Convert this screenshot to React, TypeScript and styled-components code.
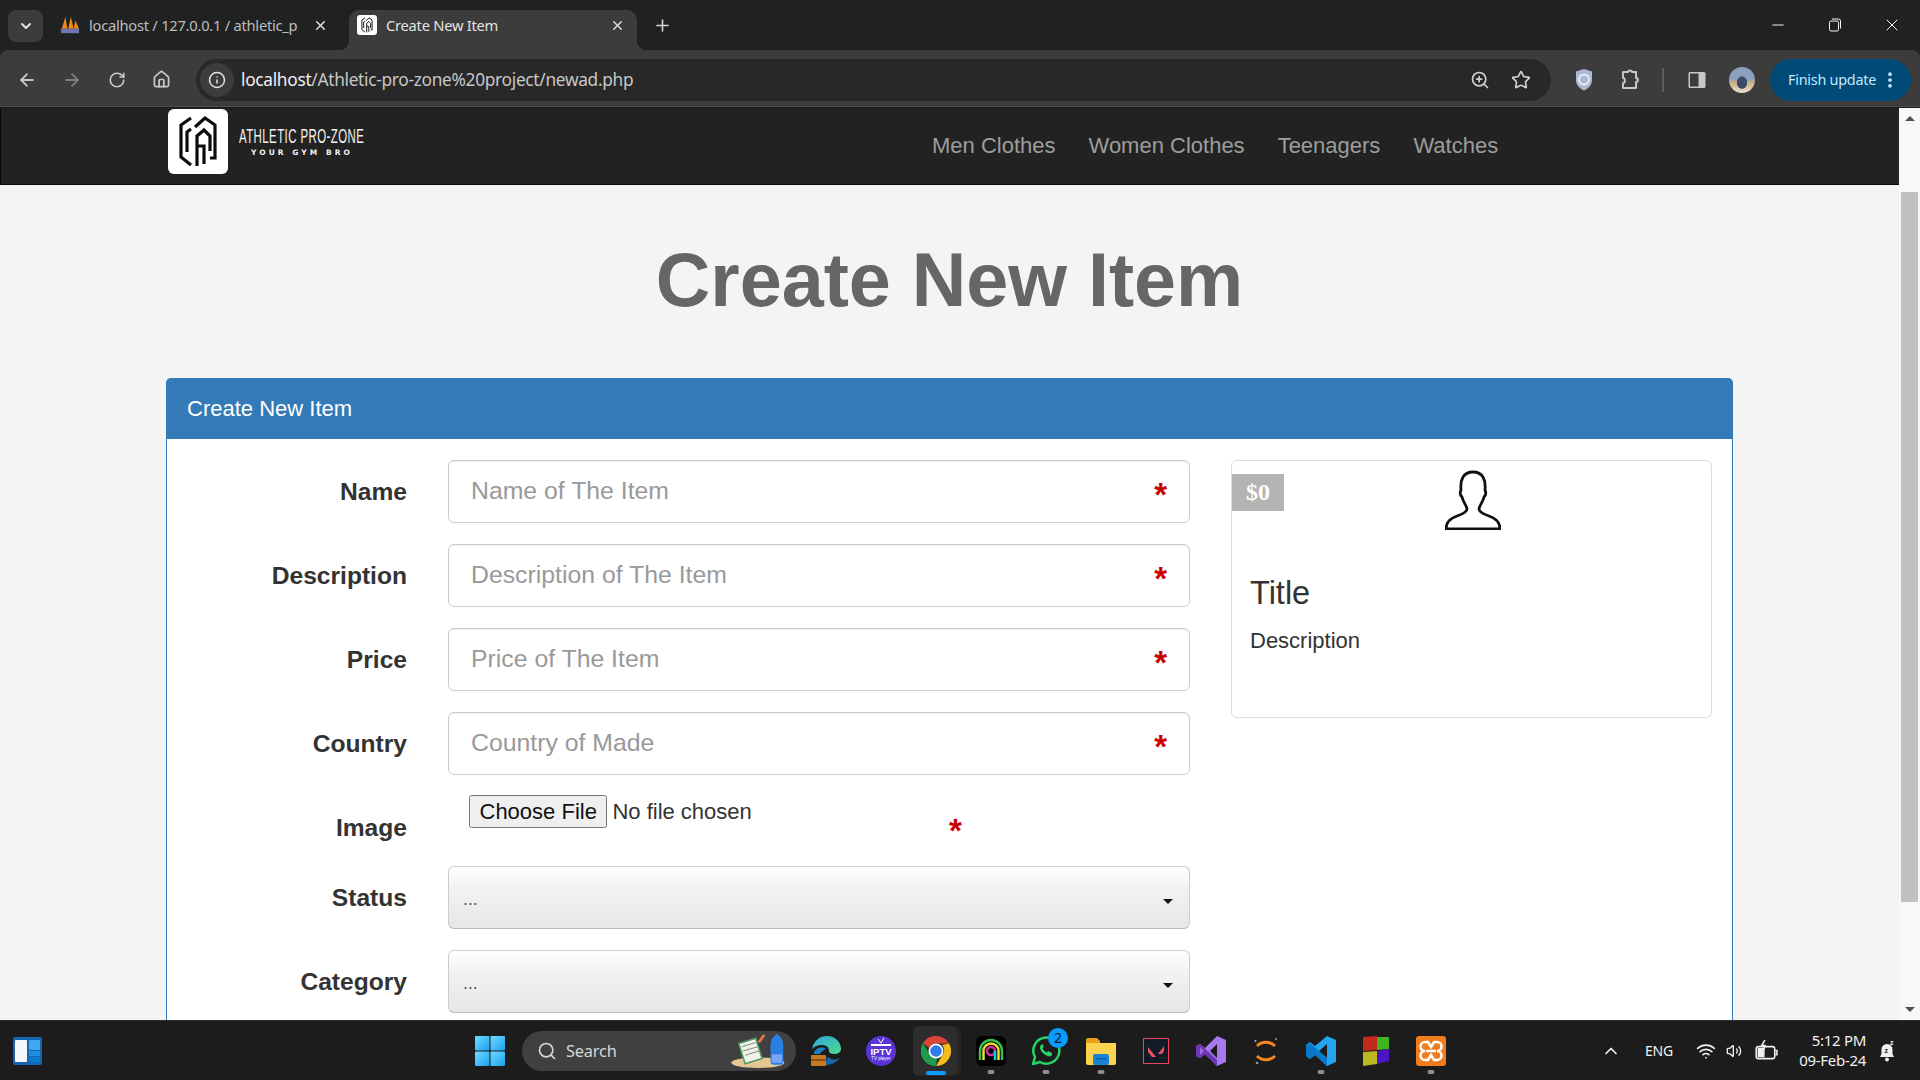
import React from 'react';
import styled, { createGlobalStyle } from 'styled-components';
import { ArrowLeft, ArrowRight, RotateCw, House, Info, ZoomIn, Star, ChevronDown, X, Plus, Minus, EllipsisVertical, ChevronUp, Wifi, Volume2, Search as SearchGlyph } from 'lucide-react';

const Global = createGlobalStyle`
  html, body { margin: 0; padding: 0; height: 100%; overflow: hidden; background: #202222; }
  #root { height: 100%; }
  * { box-sizing: border-box; }
`;

const UI = `"Noto Sans", "Open Sans", sans-serif`;
const WEB = `"Liberation Sans", Arial, sans-serif`;

const Screen = styled.div`
  width: 1920px; height: 1080px; display: flex; flex-direction: column; overflow: hidden;
  font-family: ${WEB};
`;

/* ---- browser chrome ---- */
const TabStrip = styled.div`
  height: 50px; flex: none; display: flex; align-items: flex-end; background: #202222; padding-left: 8px; color: #c7c7c7;
`;
const TabSearch = styled.div`
  width: 35px; height: 32px; margin-bottom: 8px; border-radius: 8px; background: #3c3c3c; display: flex; align-items: center; justify-content: center; color: #e3e3e3;
`;
const Tab = styled.div<{ $active?: boolean; $w: number; $pl: number; $pr: number }>`
  position: relative; height: 40px; width: ${p => p.$w}px; display: flex; align-items: center; padding: 0 ${p => p.$pr}px 10px ${p => p.$pl}px;
  border-radius: 10px 10px 0 0; font: 14.7px/20px ${UI}; letter-spacing: -0.25px; white-space: nowrap;
  color: ${p => (p.$active ? '#e3e3e3' : '#bdbdbd')};
  background: ${p => (p.$active ? '#3c3c3c' : 'transparent')};
  ${p => p.$active && `
    &::before, &::after { content: ''; position: absolute; bottom: 0; width: 10px; height: 10px; }
    &::before { left: -10px; background: radial-gradient(circle at 0 0, transparent 10px, #3c3c3c 10.5px); }
    &::after { right: -10px; background: radial-gradient(circle at 100% 0, transparent 10px, #3c3c3c 10.5px); }
  `}
`;
const TabIcon = styled.span<{ $plate?: boolean }>`
  width: 20px; height: 20px; flex: none; margin-right: 9px; display: flex; align-items: center; justify-content: center; border-radius: 3px;
  background: ${p => (p.$plate ? '#fff' : 'transparent')};
`;
const TabLabel = styled.span`
  flex: 1; overflow: hidden; min-width: 0;
`;
const TabClose = styled.span`
  flex: none; width: 16px; margin-left: 6px; display: flex; justify-content: center; color: #d8d8d8;
`;
const NewTab = styled.div`
  width: 36px; height: 36px; margin: 0 0 7px 7px; display: flex; align-items: center; justify-content: center; color: #d8d8d8;
`;
const WinControls = styled.div`
  margin-left: auto; align-self: flex-start; display: flex; color: #f4f4f4;
`;
const WinBtn = styled.div`
  width: 57px; height: 50px; display: flex; align-items: center; justify-content: center;
`;

const Toolbar = styled.div`
  height: 58px; flex: none; background: #3c3c3c; border-radius: 8px 8px 0 0; display: flex; align-items: center; padding: 2px 10px 0 4px; color: #c7c7c7;
  border-bottom: 1px solid #1c1c1c; position: relative;
  &::after { content: ''; position: absolute; left: 0; right: 0; bottom: 0; height: 1px; background: #4f4f4f; }
`;
const ToolSlot = styled.div<{ $w?: number; $dim?: boolean }>`
  width: ${p => p.$w ?? 45}px; flex: none; height: 42px; display: flex; align-items: center; justify-content: center;
  color: ${p => (p.$dim ? '#7d7d7d' : '#c7c7c7')};
`;
const Omnibox = styled.div`
  flex: none; width: 1355px; height: 42px; margin: 0 10px 0 12px; border-radius: 21px; background: #282828; display: flex; align-items: center; padding: 0 10px 0 4px;
`;
const InfoChip = styled.div`
  width: 34px; height: 34px; border-radius: 50%; background: #3c3c3c; display: flex; align-items: center; justify-content: center; color: #e3e3e3; flex: none;
`;
const Url = styled.div`
  margin-left: 7px; flex: 1; font: 17.3px/24px ${UI}; letter-spacing: -0.3px; color: #c7c7c7; white-space: nowrap;
  b { font-weight: 400; color: #f0f0f0; }
`;
const OmniIcon = styled.div`
  width: 41px; display: flex; justify-content: center; color: #d0d0d0;
`;
const ToolDivider = styled.div`
  width: 2px; height: 24px; background: #5c5c5c; margin: 0 10px 0 9px; flex: none;
`;
const Avatar = styled.div`
  width: 26px; height: 26px; border-radius: 50%;
  background: radial-gradient(ellipse at 50% 60%, #3b4a66 0 26%, transparent 30%), linear-gradient(180deg, #8aa0bd 0 45%, #c9b083 60%, #e8e2d4 100%);
`;
const UpdatePill = styled.div`
  margin-left: 6px; width: 141px; height: 42px; flex: none; border-radius: 21px; background: #004a77; color: #c2e7ff; display: flex; align-items: center; padding-left: 18px;
  font: 14.4px/20px ${UI}; letter-spacing: -0.25px; white-space: nowrap;
  svg { margin-left: 4px; }
`;

/* ---- viewport ---- */
const Viewport = styled.div`
  flex: 1; min-height: 0; display: flex; overflow: hidden; background: #f4f4f4;
`;
const Page = styled.div`
  flex: 1; min-width: 0; overflow: hidden;
`;
const Scrollbar = styled.div`
  width: 21px; flex: none; background: #f8f8f8; display: flex; flex-direction: column; align-items: center; position: relative;
`;
const ScrollUp = styled.div`
  margin-top: 8px; width: 0; height: 0; border-left: 5px solid transparent; border-right: 5px solid transparent; border-bottom: 5px solid #505050;
`;
const ScrollThumb = styled.div`
  margin-top: 71px; width: 17px; height: 710px; background: #c1c1c1;
`;
const ScrollDown = styled.div`
  margin-top: 105px; width: 0; height: 0; border-left: 5px solid transparent; border-right: 5px solid transparent; border-top: 5px solid #505050;
`;

const NavBar = styled.nav`
  height: 77px; background: #222; border-bottom: 1px solid #080808; border-left: 1px solid #080808; display: flex; padding-left: 167px;
`;
const Brand = styled.div`
  width: 747.5px; flex: none; display: flex; align-items: flex-start; padding-top: 1px;
`;
const LogoBox = styled.div`
  width: 60px; height: 65px; border-radius: 6px; background: #fff; flex: none;
`;
const BrandText = styled.div`
  margin: 19px 0 0 11px; color: #f2f2f2; display: flex; flex-direction: column;
`;
const BrandName = styled.span`
  font: 400 19.5px/17px ${WEB}; white-space: nowrap; transform: scaleX(0.588); transform-origin: 0 50%; letter-spacing: 0.7px;
`;
const BrandTag = styled.span`
  margin: 3px 0 0 12px; font: 700 7.5px/10px "DejaVu Sans", sans-serif; letter-spacing: 3.05px; white-space: nowrap;
`;
const NavLink = styled.a`
  height: 76px; padding: 0 16.5px; display: flex; align-items: center; font-size: 22px; color: #9d9d9d; white-space: nowrap; padding-bottom: 1px;
`;

const Heading = styled.h1`
  margin: 0; height: 193px; text-align: center; font: 700 75.5px/191px ${WEB}; color: #666;
`;

const Panel = styled.section`
  width: 1567px; margin-left: 166px; background: #fff; border: 1px solid #337ab7; border-radius: 6px 6px 0 0;
`;
const PanelHead = styled.div`
  height: 61px; margin: -1px -1px 0; background: #337ab7; color: #fff; font-size: 22px; line-height: 61px; padding-left: 21px; border-radius: 5px 5px 0 0;
`;
const PanelBody = styled.div`
  display: flex; align-items: flex-start; padding: 21px 20px;
`;
const FormCol = styled.form`
  width: 1003px; flex: none; display: flex; flex-direction: column; gap: 21px;
`;
const Row = styled.div<{ $h?: number }>`
  display: grid; grid-template-columns: 220px 742px; column-gap: 41px; height: ${p => p.$h ?? 63}px;
`;
const Label = styled.label`
  text-align: right; font-size: 24.6px; font-weight: 700; line-height: 64px; color: #333;
`;
const Field = styled.div`
  position: relative; height: 100%;
`;
const TextInput = styled.input`
  width: 100%; height: 63px; border: 1px solid #ccc; border-radius: 6px; padding: 0 50px 2px 22px; font: 24.8px ${WEB}; color: #555; background: #fff; outline: none;
  box-shadow: inset 0 1px 1px rgba(0,0,0,.075);
  &::placeholder { color: #999; opacity: 1; }
`;
const Asterisk = styled.span<{ $left?: number; $top?: number }>`
  position: absolute; top: ${p => p.$top ?? 19}px; ${p => (p.$left ? `left: ${p.$left}px;` : 'right: 23px;')}
  font: 700 33px/32px ${WEB}; color: #c00;
`;
const FileInput = styled.input`
  margin: -1px 0 0 21px; font: 22px ${WEB}; color: #333; width: 500px; display: block;
  &::file-selector-button { font: 22px ${WEB}; height: 33px; padding: 0 8.5px; margin-right: 5px; color: #111; }
`;
const SelectBox = styled.select`
  appearance: none; width: 100%; height: 63px; border: 1px solid #ccc; border-bottom-color: #b9b9b9; border-radius: 6px; padding: 3px 14px 0; font: 17.6px ${WEB}; color: #555;
  background: linear-gradient(180deg, #fff 0%, #f1f1f1 40%, #e6e6e6 100%); outline: none;
`;
const Caret = styled.span`
  position: absolute; right: 17px; top: 33px; width: 0; height: 0; border-left: 5px solid transparent; border-right: 5px solid transparent; border-top: 5px solid #111; pointer-events: none;
`;

const PreviewCard = styled.aside`
  position: relative; width: 481px; height: 258px; margin-left: 41px; flex: none; border: 1px solid #ddd; border-radius: 6px; background: #fff; padding: 9px 18px 0;
`;
const PriceTag = styled.span`
  position: absolute; left: 0; top: 13px; width: 52px; height: 37px; padding-bottom: 2px; background: #b3b3b3; color: #fff; display: flex; align-items: center; justify-content: center;
  font: 700 24px/1 "Liberation Serif", serif;
`;
const PersonWrap = styled.div`
  display: flex; justify-content: center; height: 60px; padding-left: 3px;
`;
const CardTitle = styled.h3`
  margin: 45px 0 0; font: 400 32.5px/36px ${WEB}; color: #333;
`;
const CardText = styled.p`
  margin: 17px 0 0; font: 22px/26px ${WEB}; color: #333;
`;

/* ---- taskbar ---- */
const Taskbar = styled.footer`
  height: 60px; flex: none; background: #1c1c1c; border-top: 1px solid #2e2e2e; display: flex; align-items: center; color: #f0f0f0; padding-right: 12px;
`;
const Widget = styled.div`
  margin-left: 13px; width: 29px; height: 28px; display: flex;
`;
const Start = styled.div`
  margin-left: 433px; width: 30px; height: 30px; flex: none;
`;
const SearchBox = styled.div`
  margin-left: 17px; width: 274px; height: 40px; border-radius: 20px; background: #404040; display: flex; align-items: center; padding-left: 15px; font: 16.4px/20px ${UI}; color: #d6d6d6; flex: none;
  span { margin-left: 9px; letter-spacing: -0.2px; }
  svg:last-child { margin-left: auto; margin-right: 4px; }
`;
const Apps = styled.div`
  margin-left: 2px; display: flex;
`;
const AppSlot = styled.div<{ $active?: boolean }>`
  position: relative; width: 55px; height: 50px; display: flex; align-items: center; justify-content: center;
  svg { position: relative; }
  ${p => p.$active && `
    &::before { content: ''; position: absolute; left: 5px; top: 0; width: 44px; height: 50px; border-radius: 6px; background: #2d2d2d; box-shadow: 5px 0 0 -1px #262626; }
  `}
`;
const RunDot = styled.span<{ $active?: boolean }>`
  position: absolute; bottom: ${p => (p.$active ? 1 : 2)}px; left: 50%; transform: translateX(-50%); height: 4px; border-radius: 2px;
  width: ${p => (p.$active ? 20 : 7)}px; background: ${p => (p.$active ? '#0a9bff' : '#8f8f8f')};
`;
const AppBadge = styled.span`
  position: absolute; top: 2px; right: 5px; width: 20px; height: 20px; border-radius: 50%; background: #0a9bff; color: #0c1420; font: 14px/20px ${UI}; text-align: center;
`;
const Tray = styled.div`
  margin-left: auto; display: flex; align-items: center;
`;
const TraySlot = styled.div<{ $w: number }>`
  width: ${p => p.$w}px; display: flex; justify-content: center; align-items: center; font: 14px/18px ${UI}; letter-spacing: -0.2px;
`;
const Clock = styled.div`
  width: 76px; text-align: right; font: 15px/20px ${UI}; letter-spacing: -0.3px; white-space: nowrap; color: #f2f2f2; margin-top: -2px;
`;

/* ---- drawings ---- */
const LogoMark = ({ w = 60, h = 65 }: { w?: number; h?: number }) => (
  <svg width={w} height={h} viewBox="0 0 60 65" fill="none" stroke="#0c0c0c" strokeWidth="3.200" strokeLinejoin="miter">
    <polyline points="23,9 13,16 13,48 23,56" />
    <polyline points="23,20 19,23 19,43" />
    <polyline points="27,18 37,9 47,16 47,49 42,49" />
    <polyline points="29,57 29,27 36,21 42,27 42,42" />
    <polyline points="30,37 36,37 36,55" />
  </svg>
);
const PmaIcon = () => (
  <svg width="22" height="20" viewBox="0 0 22 20">
    <path d="M2 14 6 1l2 13zM9 14 12 1l3 13zM15 14l2-9 4 9z" fill="#f08a12" />
    <rect x="1" y="14" width="20" height="5" fill="#6c78af" />
  </svg>
);
const ShieldIcon = () => (
  <svg width="20" height="24" viewBox="0 0 20 24">
    <path d="M10 1 18 3.500V12c0 5-3.500 8.500-8 10.500C5.500 20.500 2 17 2 12V3.500z" fill="#a9b8d4" />
    <circle cx="10" cy="11.500" r="5" fill="none" stroke="#e8edf5" strokeWidth="2" />
  </svg>
);
const PuzzleIcon = () => (
  <svg width="24" height="24" viewBox="0 0 24 24" fill="none" stroke="#c7c7c7" strokeWidth="2" strokeLinejoin="round">
    <path d="M5 4H10C10 2 14 2 14 4H18V10C20.500 10 20.500 14 18 14V20H5V15C7.500 15 7.500 10 5 10Z" />
  </svg>
);
const SidePanelIcon = () => (
  <svg width="20" height="20" viewBox="0 0 20 20">
    <rect x="1.500" y="2" width="17" height="16" rx="1.500" fill="#c7c7c7" />
    <rect x="3" y="3.500" width="8.500" height="13" fill="#3c3c3c" />
  </svg>
);
const RestoreIcon = () => (
  <svg width="14" height="14" viewBox="0 0 14 14" fill="none" stroke="#f4f4f4" strokeWidth="1">
    <rect x="1.500" y="3" width="9" height="10" rx="1.500" />
    <path d="M4 1h6.500A2 2 0 0 1 12.500 3v7.500" />
  </svg>
);
const Person = () => (
  <svg width="56" height="60" viewBox="0 0 56 60" fill="none" stroke="#111" strokeWidth="2.800" strokeLinejoin="round">
    <path d="M1 59C1 52 6 48 12 46 18 44 22 42 22 39 22 36 18 32 17 27 15 25 15 22 16 20 15 10 18 2 28 2 38 2 41 10 40 20 41 22 41 25 39 27 38 32 34 36 34 39 34 42 38 44 44 46 50 48 55 52 55 59Z" />
  </svg>
);
const WidgetIcon = () => (
  <svg width="29" height="28" viewBox="0 0 29 28">
    <rect width="29" height="28" rx="2" fill="#1266b4" />
    <rect x="2" y="3" width="12" height="22" rx="1" fill="#f4f7fb" />
    <rect x="16" y="3" width="11" height="10" fill="#3fa7ef" />
    <rect x="16" y="14" width="11" height="5" fill="#1f8de0" />
    <rect x="16" y="20" width="11" height="5" fill="#0f78d0" />
  </svg>
);
const WinLogo = () => (
  <svg width="30" height="30" viewBox="0 0 30 30">
    <defs><linearGradient id="w" x1="0" y1="0" x2="1" y2="1"><stop offset="0" stopColor="#6fdcff" /><stop offset="1" stopColor="#1c9fee" /></linearGradient></defs>
    <rect x="0" y="0" width="14.500" height="14.500" rx="1" fill="url(#w)" />
    <rect x="15.500" y="0" width="14.500" height="14.500" rx="1" fill="url(#w)" />
    <rect x="0" y="15.500" width="14.500" height="14.500" rx="1" fill="url(#w)" />
    <rect x="15.500" y="15.500" width="14.500" height="14.500" rx="1" fill="url(#w)" />
  </svg>
);
const SearchArt = () => (
  <svg width="62" height="36" viewBox="0 0 58 34">
    <ellipse cx="26" cy="28" rx="25" ry="5" fill="#e5c795" />
    <path d="M8 10 24 5 30 24 14 29z" fill="#f1f3ea" stroke="#4f9c63" strokeWidth="1.500" />
    <path d="M11 13 24 9M12 17 26 13M14 21 27 17" stroke="#8a8f8a" strokeWidth="1" />
    <path d="M26 8 31 1l2 1.500-5 7z" fill="#e8763a" />
    <path d="M38 12c0-6 3-9 6-11 3 2 6 5 6 11v15a3 3 0 0 1-3 3h-6a3 3 0 0 1-3-3z" fill="#2a7fe6" />
    <rect x="39" y="20" width="10" height="8" rx="1" fill="#7aa4f5" />
  </svg>
);
const Edge = () => (
  <svg width="30" height="30" viewBox="0 0 30 30">
    <defs><linearGradient id="e" x1="0" y1="0" x2="1" y2="1"><stop offset="0" stopColor="#2fa6e0" /><stop offset="1" stopColor="#4fd98a" /></linearGradient></defs>
    <path d="M1 13C3 4 9 0 16 0c8 0 14 6 14 13 0 3-3 5-7 5-3 0-5-1-5-3 0-4-3-6-7-6-5 0-8 2-10 4z" fill="url(#e)" />
    <path d="M14 29c6 0 11-2 15-7-4 2-9 2-12-1-2 2-3 5-3 8z" fill="#1565a8" />
    <path d="M3 16c2-4 8-6 12-3-3 1-5 3-6 5H3z" fill="#1c7fc0" />
    <rect x="0" y="19" width="15" height="11" rx="1" fill="#c8781e" />
    <rect x="0" y="23" width="15" height="2" fill="#8f4f12" />
  </svg>
);
const Iptv = () => (
  <svg width="30" height="30" viewBox="0 0 30 30">
    <circle cx="15" cy="15" r="15" fill="#5a34d6" />
    <path d="M12 3l3 4 3-5" stroke="#fff" strokeWidth="1" fill="none" />
    <path d="M5 8h20v2H5z" fill="#fff" />
    <text x="15" y="19" textAnchor="middle" fill="#fff" fontFamily="Liberation Sans" fontWeight="700" fontSize="9.500">IPTV</text>
    <text x="15" y="24" textAnchor="middle" fill="#fff" fontFamily="Liberation Sans" fontSize="4.500">TV player</text>
  </svg>
);
const ChromeIcon = () => (
  <svg width="30" height="30" viewBox="0 0 30 30">
    <path d="M15 0a15 15 0 0 1 13 7.500H15A7.500 7.500 0 0 0 8 12L2 7A15 15 0 0 1 15 0z" fill="#db4437" />
    <path d="M28 7.500A15 15 0 0 1 15 30l6.500-11A7.500 7.500 0 0 0 21 9z" fill="#f7bd1b" />
    <path d="M15 30A15 15 0 0 1 2 7l6.500 11A7.500 7.500 0 0 0 16 22z" fill="#1e9a4e" />
    <circle cx="15" cy="15" r="7.500" fill="#fff" />
    <circle cx="15" cy="15" r="5.800" fill="#2f7de9" />
  </svg>
);
const Quest = () => (
  <svg width="30" height="30" viewBox="0 0 30 30" fill="none">
    <rect width="30" height="30" rx="6" fill="#000" />
    <path d="M4 24V15a11 11 0 0 1 22 0v9" stroke="#34c24a" strokeWidth="2.500" />
    <path d="M7.500 24V15a7.500 7.500 0 0 1 15 0v9" stroke="#e6e02a" strokeWidth="2.500" />
    <circle cx="15" cy="15" r="4" stroke="#d02ca8" strokeWidth="2.500" />
    <path d="M19 15v9" stroke="#0fd0d8" strokeWidth="2.500" />
  </svg>
);
const Whats = () => (
  <svg width="30" height="30" viewBox="0 0 30 30" fill="none">
    <path d="M2 28l2-7A13 13 0 1 1 9 26z" stroke="#25d366" strokeWidth="2.500" strokeLinejoin="round" />
    <path d="M10 9c-2 2-1 6 3 9s7 3 8 1l0-2-4-2-1 1.500c-2-.5-4-3-4.500-4.500L13 11l-1.500-3z" fill="#25d366" />
  </svg>
);
const Folder = () => (
  <svg width="30" height="28" viewBox="0 0 30 28">
    <path d="M0 3a2 2 0 0 1 2-2h9l3 3v6H0z" fill="#e5a21a" />
    <path d="M0 6h30v20a2 2 0 0 1-2 2H2a2 2 0 0 1-2-2z" fill="#fbd44f" />
    <rect x="7" y="17" width="16" height="11" rx="2" fill="#1a83d4" />
    <rect x="10" y="21" width="10" height="1.500" fill="#0c5da5" />
  </svg>
);
const Valorant = () => (
  <svg width="26" height="26" viewBox="0 0 26 26">
    <rect x="0.500" y="0.500" width="25" height="25" fill="#111c27" stroke="#e8455a" />
    <path d="M5 9 13 19H9L5 14zM21 8 15 16H19L21 13z" fill="#f3505f" />
  </svg>
);
const VisualStudio = () => (
  <svg width="30" height="30" viewBox="0 0 30 30">
    <path d="M21 0 30 4v22l-9 4-12-12-5 4-4-2V10l4-2 5 4zM21 8l-7 7 7 7z" fill="#a879ec" />
    <path d="M0 10 4 8l17 16v6L9 18l-5 4-4-2z" fill="#6b35b5" />
    <path d="M4 11v8l4-4z" fill="#9a6ce0" />
  </svg>
);
const Eclipse = () => (
  <svg width="24" height="30" viewBox="0 0 24 30" fill="none">
    <path d="M3 10c5-5 13-5 18 0M3 20c5 5 13 5 18 0" stroke="#f5831f" strokeWidth="3" />
    <circle cx="1.500" cy="5" r="1" fill="#bbb" /><circle cx="22" cy="3" r="1" fill="#999" /><circle cx="3" cy="27" r="1.300" fill="#999" />
  </svg>
);
const VsCode = () => (
  <svg width="30" height="30" viewBox="0 0 30 30">
    <path d="M21 0 30 4v22l-9 4-12-11-5 4-4-3v-2l5-3-5-3V9l4-3 5 4zM21 8l-8 7 8 7z" fill="#23a4f0" />
    <path d="M0 10 4 7l17 15v8L9 19l-5 4-4-3z" fill="#0a78c8" />
  </svg>
);
const Blocks = () => (
  <svg width="28" height="30" viewBox="0 0 28 30">
    <path d="M1 1 15 0v14L1 15z" fill="#c22a1e" />
    <path d="M15 1 27 1v12L15 14z" fill="#3fb51f" />
    <path d="M1 16 15 15v13L1 30z" fill="#bcb81f" />
    <path d="M15 15 27 13v12L15 28z" fill="#4a16c2" />
  </svg>
);
const Xampp = () => (
  <svg width="30" height="30" viewBox="0 0 30 30" fill="none">
    <rect width="30" height="30" rx="3" fill="#f07c1d" />
    <path d="M9 6h3l3 5 3-5h3a4 4 0 0 1 0 9 4 4 0 0 1 0 9h-3l-3-5-3 5H9a4 4 0 0 1 0-9 4 4 0 0 1 0-9z" stroke="#fff" strokeWidth="2.500" />
    <path d="M10 15h10" stroke="#fff" strokeWidth="2.500" />
  </svg>
);
const Battery = () => (
  <svg width="24" height="24" viewBox="0 0 22 22" fill="none" stroke="#f0f0f0" strokeWidth="1.400">
    <rect x="2" y="7" width="17" height="11" rx="2" />
    <path d="M19.500 10.500h1.500v4h-1.500" />
    <path d="M4 9h5v7H4z" fill="#f0f0f0" />
    <path d="M10 1 7 6h3l-1 4" />
  </svg>
);
const Bell = () => (
  <svg width="18" height="24" viewBox="0 0 18 24">
    <path d="M9 5a5.500 5.500 0 0 0-5.500 5.500V15L2 18h14l-1.500-3v-4.500A5.500 5.500 0 0 0 9 5z" fill="#f0f0f0" />
    <circle cx="9" cy="20.500" r="2" fill="#f0f0f0" />
    <text x="6.500" y="14" fill="#1c1c1c" fontFamily="Liberation Sans" fontWeight="700" fontSize="7">z</text>
    <text x="12" y="6" fill="#f0f0f0" fontFamily="Liberation Sans" fontWeight="700" fontSize="7">z</text>
  </svg>
);

const fields = [
  { label: 'Name', ph: 'Name of The Item' },
  { label: 'Description', ph: 'Description of The Item' },
  { label: 'Price', ph: 'Price of The Item' },
  { label: 'Country', ph: 'Country of Made' },
];
const apps: { el: React.ReactNode; run?: boolean; active?: boolean; badge?: string }[] = [
  { el: <Edge /> },
  { el: <Iptv /> },
  { el: <ChromeIcon />, run: true, active: true },
  { el: <Quest />, run: true },
  { el: <Whats />, run: true, badge: '2' },
  { el: <Folder />, run: true },
  { el: <Valorant /> },
  { el: <VisualStudio /> },
  { el: <Eclipse /> },
  { el: <VsCode />, run: true },
  { el: <Blocks /> },
  { el: <Xampp />, run: true },
];

export default function App() {
  return (
    <Screen>
      <Global />
      <TabStrip>
        <TabSearch><ChevronDown size={16} strokeWidth={3} /></TabSearch>
        <Tab $w={306} $pl={17} $pr={21}>
          <TabIcon><PmaIcon /></TabIcon>
          <TabLabel>localhost / 127.0.0.1 / athletic_p</TabLabel>
          <TabClose><X size={15} strokeWidth={2.500} /></TabClose>
        </Tab>
        <Tab $active $w={288} $pl={8} $pr={12}>
          <TabIcon $plate><LogoMark w={18} h={20} /></TabIcon>
          <TabLabel>Create New Item</TabLabel>
          <TabClose><X size={15} strokeWidth={2.500} /></TabClose>
        </Tab>
        <NewTab><Plus size={19} strokeWidth={2} /></NewTab>
        <WinControls>
          <WinBtn><Minus size={18} strokeWidth={1.300} /></WinBtn>
          <WinBtn><RestoreIcon /></WinBtn>
          <WinBtn><X size={20} strokeWidth={1.200} /></WinBtn>
        </WinControls>
      </TabStrip>
      <Toolbar>
        <ToolSlot><ArrowLeft size={20} strokeWidth={2.200} /></ToolSlot>
        <ToolSlot $dim><ArrowRight size={20} strokeWidth={2.200} /></ToolSlot>
        <ToolSlot><RotateCw size={18} strokeWidth={2.200} /></ToolSlot>
        <ToolSlot><House size={19} strokeWidth={2.200} /></ToolSlot>
        <Omnibox>
          <InfoChip><Info size={18} strokeWidth={2} /></InfoChip>
          <Url><b>localhost</b>/Athletic-pro-zone%20project/newad.php</Url>
          <OmniIcon><ZoomIn size={20} strokeWidth={2} /></OmniIcon>
          <OmniIcon><Star size={20} strokeWidth={2} /></OmniIcon>
        </Omnibox>
        <ToolSlot $w={46}><ShieldIcon /></ToolSlot>
        <ToolSlot $w={46}><PuzzleIcon /></ToolSlot>
        <ToolDivider />
        <ToolSlot $w={45}><SidePanelIcon /></ToolSlot>
        <ToolSlot $w={45}><Avatar /></ToolSlot>
        <UpdatePill>Finish update<EllipsisVertical size={20} strokeWidth={2.500} /></UpdatePill>
      </Toolbar>
      <Viewport>
        <Page>
          <NavBar>
            <Brand>
              <LogoBox><LogoMark /></LogoBox>
              <BrandText>
                <BrandName>ATHLETIC PRO-ZONE</BrandName>
                <BrandTag>YOUR GYM BRO</BrandTag>
              </BrandText>
            </Brand>
            <NavLink>Men Clothes</NavLink>
            <NavLink>Women Clothes</NavLink>
            <NavLink>Teenagers</NavLink>
            <NavLink>Watches</NavLink>
          </NavBar>
          <Heading>Create New Item</Heading>
          <Panel>
            <PanelHead>Create New Item</PanelHead>
            <PanelBody>
              <FormCol>
                {fields.map(f => (
                  <Row key={f.label}>
                    <Label>{f.label}</Label>
                    <Field>
                      <TextInput placeholder={f.ph} readOnly />
                      <Asterisk>*</Asterisk>
                    </Field>
                  </Row>
                ))}
                <Row $h={49}>
                  <Label>Image</Label>
                  <Field>
                    <FileInput type="file" />
                    <Asterisk $left={501} $top={19}>*</Asterisk>
                  </Field>
                </Row>
                <Row>
                  <Label>Status</Label>
                  <Field>
                    <SelectBox><option>...</option></SelectBox>
                    <Caret />
                  </Field>
                </Row>
                <Row>
                  <Label>Category</Label>
                  <Field>
                    <SelectBox><option>...</option></SelectBox>
                    <Caret />
                  </Field>
                </Row>
              </FormCol>
              <PreviewCard>
                <PriceTag>$0</PriceTag>
                <PersonWrap><Person /></PersonWrap>
                <CardTitle>Title</CardTitle>
                <CardText>Description</CardText>
              </PreviewCard>
            </PanelBody>
          </Panel>
        </Page>
        <Scrollbar>
          <ScrollUp />
          <ScrollThumb />
          <ScrollDown />
        </Scrollbar>
      </Viewport>
      <Taskbar>
        <Widget><WidgetIcon /></Widget>
        <Start><WinLogo /></Start>
        <SearchBox>
          <SearchGlyph size={20} strokeWidth={2} />
          <span>Search</span>
          <SearchArt />
        </SearchBox>
        <Apps>
          {apps.map((a, i) => (
            <AppSlot key={i} $active={a.active}>
              {a.el}
              {a.badge && <AppBadge>{a.badge}</AppBadge>}
              {a.run && <RunDot $active={a.active} />}
            </AppSlot>
          ))}
        </Apps>
        <Tray>
          <TraySlot $w={42}><ChevronUp size={20} strokeWidth={2} /></TraySlot>
          <TraySlot $w={54}>ENG</TraySlot>
          <TraySlot $w={40}><Wifi size={20} strokeWidth={2} /></TraySlot>
          <TraySlot $w={16}><Volume2 size={20} strokeWidth={2} /></TraySlot>
          <TraySlot $w={48}><Battery /></TraySlot>
          <Clock>5:12 PM<br />09-Feb-24</Clock>
          <TraySlot $w={42}><Bell /></TraySlot>
        </Tray>
      </Taskbar>
    </Screen>
  );
}
